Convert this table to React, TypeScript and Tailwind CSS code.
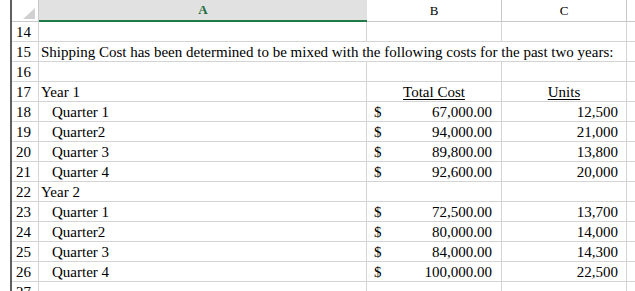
import React from "react";

type Row = {
  n: number;
  a?: string;
  indent?: boolean;
  span?: boolean;
  b?: string;
  c?: string;
  dollar?: boolean;
  header?: boolean;
};

const rows: Row[] = [
  { n: 14 },
  {
    n: 15,
    a: "Shipping Cost has been determined to be mixed with the following costs for the past two years:",
    span: true,
  },
  { n: 16 },
  { n: 17, a: "Year 1", b: "Total Cost", c: "Units", header: true },
  { n: 18, a: "Quarter 1", indent: true, dollar: true, b: "67,000.00", c: "12,500" },
  { n: 19, a: "Quarter2", indent: true, dollar: true, b: "94,000.00", c: "21,000" },
  { n: 20, a: "Quarter 3", indent: true, dollar: true, b: "89,800.00", c: "13,800" },
  { n: 21, a: "Quarter 4", indent: true, dollar: true, b: "92,600.00", c: "20,000" },
  { n: 22, a: "Year 2" },
  { n: 23, a: "Quarter 1", indent: true, dollar: true, b: "72,500.00", c: "13,700" },
  { n: 24, a: "Quarter2", indent: true, dollar: true, b: "80,000.00", c: "14,000" },
  { n: 25, a: "Quarter 3", indent: true, dollar: true, b: "84,000.00", c: "14,300" },
  { n: 26, a: "Quarter 4", indent: true, dollar: true, b: "100,000.00", c: "22,500" },
  { n: 27 },
];

const cell =
  "h-[20px] border-b border-r border-[#d4d4d4] flex items-center pt-[1px] overflow-visible whitespace-nowrap";

export default function App() {
  return (
    <div
      className="w-[635px] h-[291px] overflow-hidden bg-white flex text-black"
      style={{ fontFamily: '"Liberation Serif", "Times New Roman", serif' }}
    >
      <div className="w-[10px] shrink-0 bg-white" />
      <div className="w-[2px] shrink-0 bg-[#5f5f5f]" />
      <div className="flex-1 grid grid-cols-[27px_328px_135px_125px_1fr] auto-rows-min content-start text-[15px]">
        {/* header row */}
        <div className="h-[22px] border-b border-r border-[#c8c8c8] bg-white relative">
          <div
            className="absolute left-[11px] top-[8px] w-[12px] h-[11px] bg-[#d0d0d0]"
            style={{ clipPath: "polygon(100% 0, 100% 100%, 0 100%)" }}
          />
        </div>
        <div className="h-[22px] bg-[#e1e1e1] border-b-2 border-[#1f7a45] flex items-center justify-center text-[13px] font-bold text-[#1d6b3c]">
          A
        </div>
        <div className="h-[22px] bg-white border-b border-r border-[#c8c8c8] flex items-center justify-center text-[13px]">
          B
        </div>
        <div className="h-[22px] bg-white border-b border-r border-[#c8c8c8] flex items-center justify-center text-[13px]">
          C
        </div>
        <div className="h-[22px] bg-white border-b border-[#c8c8c8]" />

        {rows.map((r) => (
          <React.Fragment key={r.n}>
            <div className={`${cell} pl-[4px] border-[#c8c8c8]`}>{r.n}</div>
            {r.span ? (
              <div className={`${cell} col-span-3 pl-[2px]`}>{r.a}</div>
            ) : (
              <>
                <div className={`${cell} ${r.indent ? "pl-[13px]" : "pl-[2px]"}`}>{r.a ?? ""}</div>
                <div
                  className={`${cell} ${
                    r.header ? "justify-center" : "justify-between pl-[7px] pr-[9px]"
                  }`}
                >
                  {r.header ? (
                    <span className="underline underline-offset-[2px]">{r.b}</span>
                  ) : r.dollar ? (
                    <>
                      <span>$</span>
                      <span>{r.b}</span>
                    </>
                  ) : null}
                </div>
                <div
                  className={`${cell} ${r.header ? "justify-center" : "justify-end pr-[8px]"}`}
                >
                  {r.header ? (
                    <span className="underline underline-offset-[2px]">{r.c}</span>
                  ) : (
                    r.c ?? ""
                  )}
                </div>
              </>
            )}
            <div className={`${cell} border-r-0`} />
          </React.Fragment>
        ))}
      </div>
    </div>
  );
}
